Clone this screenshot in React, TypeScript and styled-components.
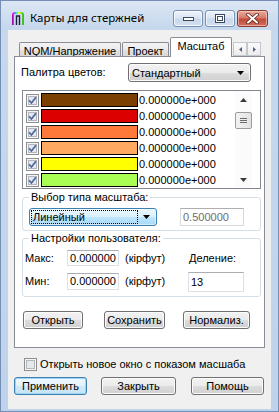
import React from 'react';
import styled, { createGlobalStyle } from 'styled-components';

const Global = createGlobalStyle`
  html, body { margin: 0; padding: 0; background: #ffffff; }
  body { font-family: "Liberation Sans", Arial, sans-serif; font-size: 11px; color: #000; }
  * { box-sizing: border-box; }
`;

const Window = styled.div`
  width: 279px;
  height: 412px;
  display: flex;
  flex-direction: column;
  background: linear-gradient(#dce7f4 0px, #c6d8ed 28px, #bed3eb 100%);
  box-shadow: inset 0 0 0 1px #7590b4;
`;

const TitleBar = styled.div`
  height: 30px;
  flex: none;
  display: flex;
  align-items: center;
  padding: 6px 11px 0 12px;
`;

const Title = styled.span`
  margin-left: 6px;
  font-family: "Noto Sans", "Open Sans", sans-serif;
  font-size: 11.5px;
  line-height: 14px;
  color: #000;
`;

const CaptionButtons = styled.div`
  margin-left: auto;
  align-self: flex-start;
  margin-top: 4px;
  display: flex;
  gap: 2px;
`;

const CaptionButton = styled.div<{ $close?: boolean; $w: number }>`
  width: ${p => p.$w}px;
  height: 17px;
  border-radius: 3px;
  display: flex;
  align-items: center;
  justify-content: center;
  border: 1px solid ${p => (p.$close ? '#8a3b2f' : '#7891b2')};
  background: ${p =>
    p.$close
      ? 'linear-gradient(#e8ab9c 0%, #d77b6b 45%, #c24a3b 55%, #d0705f 100%)'
      : 'linear-gradient(#eef3fa 0%, #dbe5f2 45%, #c9d8eb 55%, #d3e0f0 100%)'};
  box-shadow: inset 0 0 0 1px ${p => (p.$close ? 'rgba(255,210,200,0.6)' : 'rgba(255,255,255,0.7)')};
`;

const Client = styled.div`
  flex: 1;
  margin: 0 8px 3px 8px;
  background: #f0f0f0;
  padding: 7px 7px 0 6px;
  display: flex;
  flex-direction: column;
`;

const TabStrip = styled.div`
  height: 20px;
  display: flex;
  align-items: flex-end;
  padding-left: 5px;
  position: relative;
`;

const Tab = styled.div<{ $active?: boolean; $w: number }>`
  width: ${p => p.$w}px;
  height: ${p => (p.$active ? 20 : 15)}px;
  margin-right: ${p => (p.$active ? 0 : 1)}px;
  border: 1px solid #898c95;
  border-bottom: none;
  border-radius: 2px 2px 0 0;
  padding-top: 2px;
  text-align: center;
  line-height: 12px;
  white-space: nowrap;
  background: ${p =>
    p.$active ? '#ffffff' : 'linear-gradient(#f3f3f3 0%, #ebebeb 50%, #e1e1e1 51%, #d8d8d8 100%)'};
  position: relative;
  z-index: ${p => (p.$active ? 2 : 0)};
`;

const TabScroll = styled.div`
  align-self: flex-start;
  margin-top: 5px;
  margin-left: 1px;
  display: flex;
`;

const TabScrollBtn = styled.div`
  width: 14px;
  height: 14px;
  border: 1px solid #c3c8d0;
  background: linear-gradient(#fbfbfb, #ececec);
  display: flex;
  align-items: center;
  justify-content: center;
`;

const Panel = styled.div`
  width: 251px;
  height: 292px;
  margin-top: -1px;
  border: 1px solid #898c95;
  background: #ffffff;
  display: flex;
  flex-direction: column;
  position: relative;
  z-index: 1;
`;

const PaletteRow = styled.div`
  margin-top: 6px;
  height: 19px;
  padding: 0 13px 0 6px;
  display: flex;
  align-items: center;
  justify-content: space-between;
`;

const Text = styled.span<{ $gray?: boolean }>`
  line-height: 13px;
  white-space: nowrap;
  color: ${p => (p.$gray ? '#6d6d6d' : '#000')};
`;

const Combo = styled.div<{ $focused?: boolean; $w: number; $h: number }>`
  width: ${p => p.$w}px;
  height: ${p => p.$h}px;
  border: 1px solid ${p => (p.$focused ? '#3c7fb1' : '#707070')};
  border-radius: 3px;
  display: flex;
  align-items: center;
  padding: 0 6px 0 2px;
  background: ${p =>
    p.$focused
      ? 'linear-gradient(#eaf6fd 0%, #d9f0fc 50%, #bee6fd 51%, #a7d9f5 100%)'
      : 'linear-gradient(#f2f2f2 0%, #ebebeb 50%, #dddddd 51%, #cfcfcf 100%)'};
  box-shadow: inset 0 0 0 1px ${p => (p.$focused ? 'rgba(255,255,255,0.5)' : '#fcfcfc')};
`;

const ComboText = styled.span<{ $focusRing?: boolean }>`
  flex: 1;
  line-height: 12px;
  padding: 0 1px;
  margin-right: 6px;
  outline: ${p => (p.$focusRing ? '1px dotted #000' : 'none')};
  white-space: nowrap;
`;

const ListBox = styled.div`
  margin: 8px 0 0 7px;
  width: 239px;
  height: 99px;
  border: 1px solid #828790;
  display: flex;
  background: #fff;
`;

const ListRows = styled.div`
  flex: 1;
  padding: 1px 0 0 3px;
  overflow: hidden;
`;

const ListRow = styled.div`
  height: 16px;
  display: flex;
  align-items: center;
`;

const Swatch = styled.div`
  width: 97px;
  height: 14px;
  margin-left: 2px;
  border: 1px solid #000;
`;

const Value = styled.span`
  padding-left: 1px;
  line-height: 13px;
  white-space: nowrap;
`;

const ScrollBar = styled.div`
  width: 17px;
  margin-right: 8px;
  display: flex;
  flex-direction: column;
  background: #fbfbfb;
`;

const ScrollArrow = styled.div`
  height: 17px;
  display: flex;
  align-items: center;
  justify-content: center;
`;

const Thumb = styled.div`
  margin-top: 4px;
  height: 17px;
  border: 1px solid #9c9c9c;
  border-radius: 2px;
  background: linear-gradient(90deg, #f3f3f3, #e2e2e2);
  display: flex;
  align-items: center;
  justify-content: center;
`;

const Spacer = styled.div`
  flex: 1;
`;

const Group = styled.fieldset<{ $mt: number }>`
  margin: ${p => p.$mt}px 0 0 7px;
  width: 239px;
  border: 1px solid #d5dfe5;
  border-radius: 3px;
  padding: 0;
  min-width: 0;
`;

const Legend = styled.legend`
  margin-left: 6px;
  padding: 0 2px;
  line-height: 13px;
  font-size: 11px;
`;

const ScaleRow = styled.div`
  display: flex;
  align-items: center;
  padding: 4px 0 4px 6px;
`;

const Edit = styled.div<{ $w: number; $h: number; $disabled?: boolean }>`
  width: ${p => p.$w}px;
  height: ${p => p.$h}px;
  border: 1px solid ${p => (p.$disabled ? '#d9d9d9' : '#dbdfe6')};
  border-top-color: ${p => (p.$disabled ? '#afafaf' : '#abadb3')};
  background: #fff;
  display: flex;
  align-items: center;
  padding-left: 2px;
  line-height: 13px;
  color: ${p => (p.$disabled ? '#6d6d6d' : '#000')};
  white-space: nowrap;
  overflow: hidden;
`;

const UserBody = styled.div`
  display: flex;
  padding: 5px 16px 4px 2px;
`;

const Column = styled.div<{ $right?: boolean }>`
  display: flex;
  flex-direction: column;
  gap: 7px;
  margin-left: ${p => (p.$right ? 'auto' : '0')};
`;

const FieldRow = styled.div`
  display: flex;
  align-items: center;
`;

const FieldLabel = styled.span`
  width: 42px;
  line-height: 13px;
`;

const Unit = styled.span`
  margin-left: 6px;
  line-height: 13px;
`;

const DivLabel = styled.span`
  padding: 2px 0 0 1px;
  line-height: 13px;
`;

const ButtonRow = styled.div`
  display: flex;
  margin-top: 14px;
  padding-left: 8px;
`;

const Button = styled.div<{ $w: number; $gap?: number; $default?: boolean }>`
  width: ${p => p.$w}px;
  height: 18px;
  margin-right: ${p => p.$gap ?? 0}px;
  border: 1px solid ${p => (p.$default ? '#3c7fb1' : '#707070')};
  border-radius: 3px;
  display: flex;
  align-items: center;
  justify-content: center;
  line-height: 13px;
  white-space: nowrap;
  background: ${p =>
    p.$default
      ? 'linear-gradient(#eef7fd 0%, #e2f2fc 50%, #cfe9f9 51%, #c6e4f6 100%)'
      : 'linear-gradient(#f2f2f2 0%, #ebebeb 50%, #dddddd 51%, #cfcfcf 100%)'};
  box-shadow: inset 0 0 0 1px ${p => (p.$default ? '#9fd6f3' : '#fcfcfc')};
`;

const CheckRow = styled.div`
  margin-top: 10px;
  padding-left: 10px;
  display: flex;
  align-items: center;
  gap: 3px;
`;

const DialogButtons = styled.div`
  margin-top: 6px;
  display: flex;
`;

const AppIcon = () => (
  <svg width="12" height="13" viewBox="0 0 12 13">
    <defs>
      <linearGradient id="appg" x1="0" y1="0" x2="1" y2="0">
        <stop offset="0" stopColor="#ff00ff" />
        <stop offset="0.3" stopColor="#00e0ff" />
        <stop offset="0.6" stopColor="#ffff00" />
        <stop offset="1" stopColor="#30c030" />
      </linearGradient>
    </defs>
    <path d="M1 13 V3 Q1 1 3 1 H9 Q11 1 11 3 V13" fill="none" stroke="url(#appg)" strokeWidth="2" />
    <path d="M4.5 13 V4 H7.5 V13" fill="none" stroke="#202040" strokeWidth="1.4" />
    <path d="M0 13 V3" stroke="#202040" strokeWidth="0.8" />
  </svg>
);

const CheckBox = ({ checked }: { checked: boolean }) => (
  <svg width="13" height="13" viewBox="0 0 13 13" style={{ flex: 'none' }}>
    <rect x="0.5" y="0.5" width="12" height="12" fill="#f6f6f6" stroke="#8e8f8f" />
    <rect x="2.5" y="2.5" width="8" height="8" fill="#e6e8eb" stroke="#b2b7bd" />
    {checked && <path d="M3 6.3 L5.4 9 L10 3.2" fill="none" stroke="#4a64a3" strokeWidth="1.7" />}
  </svg>
);

const DownTri = () => (
  <svg width="7" height="4" viewBox="0 0 7 4">
    <path d="M0 0 H7 L3.5 4 Z" fill="#000" />
  </svg>
);

const swatches = ['#7b3f00', '#dc0000', '#ff7a3a', '#ffaa60', '#ffff00', '#aaff55'];

export default function App() {
  return (
    <>
      <Global />
      <Window>
        <TitleBar>
          <AppIcon />
          <Title>Карты для стержней</Title>
          <CaptionButtons>
            <CaptionButton $w={30}>
              <svg width="11" height="4" viewBox="0 0 11 4">
                <rect x="0.5" y="0.5" width="10" height="3" fill="#fff" stroke="#3a4a5e" />
              </svg>
            </CaptionButton>
            <CaptionButton $w={30}>
              <svg width="10" height="9" viewBox="0 0 10 9">
                <rect x="0.5" y="0.5" width="9" height="8" fill="#fff" stroke="#3a4a5e" />
                <rect x="2.5" y="2.5" width="5" height="4" fill="none" stroke="#3a4a5e" />
              </svg>
            </CaptionButton>
            <CaptionButton $w={31} $close>
              <svg width="13" height="11" viewBox="0 0 13 11">
                <path d="M2 1.5 L11 9.5 M11 1.5 L2 9.5" stroke="#5a2018" strokeWidth="3.6" strokeLinecap="round" />
                <path d="M2 1.5 L11 9.5 M11 1.5 L2 9.5" stroke="#fff" strokeWidth="2" strokeLinecap="round" />
              </svg>
            </CaptionButton>
          </CaptionButtons>
        </TitleBar>

        <Client>
          <TabStrip>
            <Tab $w={102}>NQM/Напряжение</Tab>
            <Tab $w={47}>Проект</Tab>
            <Tab $w={62} $active>Масштаб</Tab>
            <TabScroll>
              <TabScrollBtn>
                <svg width="3" height="5" viewBox="0 0 3 5"><path d="M3 0 V5 L0 2.5 Z" fill="#51627d" /></svg>
              </TabScrollBtn>
              <TabScrollBtn>
                <svg width="3" height="5" viewBox="0 0 3 5"><path d="M0 0 V5 L3 2.5 Z" fill="#51627d" /></svg>
              </TabScrollBtn>
            </TabScroll>
          </TabStrip>

          <Panel>
            <PaletteRow>
              <Text>Палитра цветов:</Text>
              <Combo $w={123} $h={19}>
                <ComboText>Стандартный</ComboText>
                <DownTri />
              </Combo>
            </PaletteRow>

            <ListBox>
              <ListRows>
                {swatches.map(c => (
                  <ListRow key={c}>
                    <CheckBox checked />
                    <Swatch style={{ background: c }} />
                    <Value>0.000000e+000</Value>
                  </ListRow>
                ))}
              </ListRows>
              <ScrollBar>
                <ScrollArrow>
                  <svg width="7" height="4" viewBox="0 0 7 4"><path d="M0 4 H7 L3.5 0 Z" fill="#3c3c3c" /></svg>
                </ScrollArrow>
                <Thumb>
                  <svg width="7" height="7" viewBox="0 0 7 7">
                    <path d="M0 1.5 H7 M0 3.5 H7 M0 5.5 H7" stroke="#6b6b6b" strokeWidth="1" />
                  </svg>
                </Thumb>
                <Spacer />
                <ScrollArrow>
                  <svg width="7" height="4" viewBox="0 0 7 4"><path d="M0 0 H7 L3.5 4 Z" fill="#3c3c3c" /></svg>
                </ScrollArrow>
              </ScrollBar>
            </ListBox>

            <Group $mt={2}>
              <Legend>Выбор типа масштаба:</Legend>
              <ScaleRow>
                <Combo $w={128} $h={18} $focused>
                  <ComboText $focusRing>Линейный</ComboText>
                  <DownTri />
                </Combo>
                <Edit $w={64} $h={18} $disabled style={{ marginLeft: 23 }}>0.500000</Edit>
              </ScaleRow>
            </Group>

            <Group $mt={1}>
              <Legend>Настройки пользователя:</Legend>
              <UserBody>
                <Column>
                  <FieldRow>
                    <FieldLabel>Макс:</FieldLabel>
                    <Edit $w={52} $h={16}>0.000000</Edit>
                    <Unit>(кірфут)</Unit>
                  </FieldRow>
                  <FieldRow>
                    <FieldLabel>Мин:</FieldLabel>
                    <Edit $w={52} $h={17}>0.000000</Edit>
                    <Unit>(кірфут)</Unit>
                  </FieldRow>
                </Column>
                <Column $right>
                  <DivLabel>Деление:</DivLabel>
                  <Edit $w={56} $h={20}>13</Edit>
                </Column>
              </UserBody>
            </Group>

            <ButtonRow>
              <Button $w={60} $gap={21}>Открыть</Button>
              <Button $w={61} $gap={18}>Сохранить</Button>
              <Button $w={67}>Нормализ.</Button>
            </ButtonRow>
          </Panel>

          <CheckRow>
            <CheckBox checked={false} />
            <Text>Открыть новое окно с показом масшаба</Text>
          </CheckRow>

          <DialogButtons>
            <Button $w={73} $gap={14} $default>Применить</Button>
            <Button $w={75} $gap={15}>Закрыть</Button>
            <Button $w={73}>Помощь</Button>
          </DialogButtons>
        </Client>
      </Window>
    </>
  );
}
